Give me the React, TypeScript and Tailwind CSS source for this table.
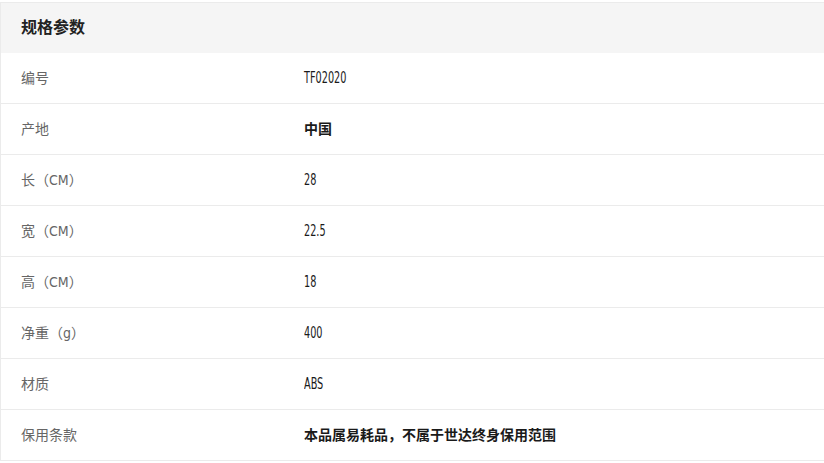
const rows: { label: string; value: string; bold?: boolean }[] = [
  { label: "编号", value: "TF02020" },
  { label: "产地", value: "中国", bold: true },
  { label: "长（CM）", value: "28" },
  { label: "宽（CM）", value: "22.5" },
  { label: "高（CM）", value: "18" },
  { label: "净重（g）", value: "400" },
  { label: "材质", value: "ABS" },
  { label: "保用条款", value: "本品属易耗品，不属于世达终身保用范围", bold: true },
];

const narrow = "font-['DejaVu_Sans_Condensed','Noto_Sans_CJK_SC',sans-serif] font-stretch-condensed";

export default function App() {
  return (
    <div className="w-[824px] h-[463px] bg-white overflow-hidden pt-[2px] font-['Noto_Sans_CJK_SC',sans-serif]">
      <div className="border-l border-t border-b border-[#ebebeb]">
        <div className="h-[50px] bg-[#f5f5f5] flex items-center px-[20px] pb-[4px]">
          <h3 className="text-[16px] font-bold text-[#222]">规格参数</h3>
        </div>
        {rows.map((r, i) => (
          <div
            key={i}
            className={`flex items-center pb-[1px] ${i < rows.length - 1 ? "h-[51px] border-b border-[#ebebeb]" : "h-[50px]"}`}
          >
            <div className={`w-[283px] pl-[20px] mt-[1px] text-[14px] text-[#666] ${narrow}`}>{r.label}</div>
            <div className={`pl-[20px] text-[#1a1a1a] ${r.bold ? "mb-[3px]" : "mb-[4px]"}`}>
              {r.bold ? (
                <span className="text-[14px] font-bold">{r.value}</span>
              ) : (
                <span className={`inline-block origin-left scale-x-[0.72] text-[15px] leading-[20px] ${narrow}`}>
                  {r.value}
                </span>
              )}
            </div>
          </div>
        ))}
      </div>
    </div>
  );
}
